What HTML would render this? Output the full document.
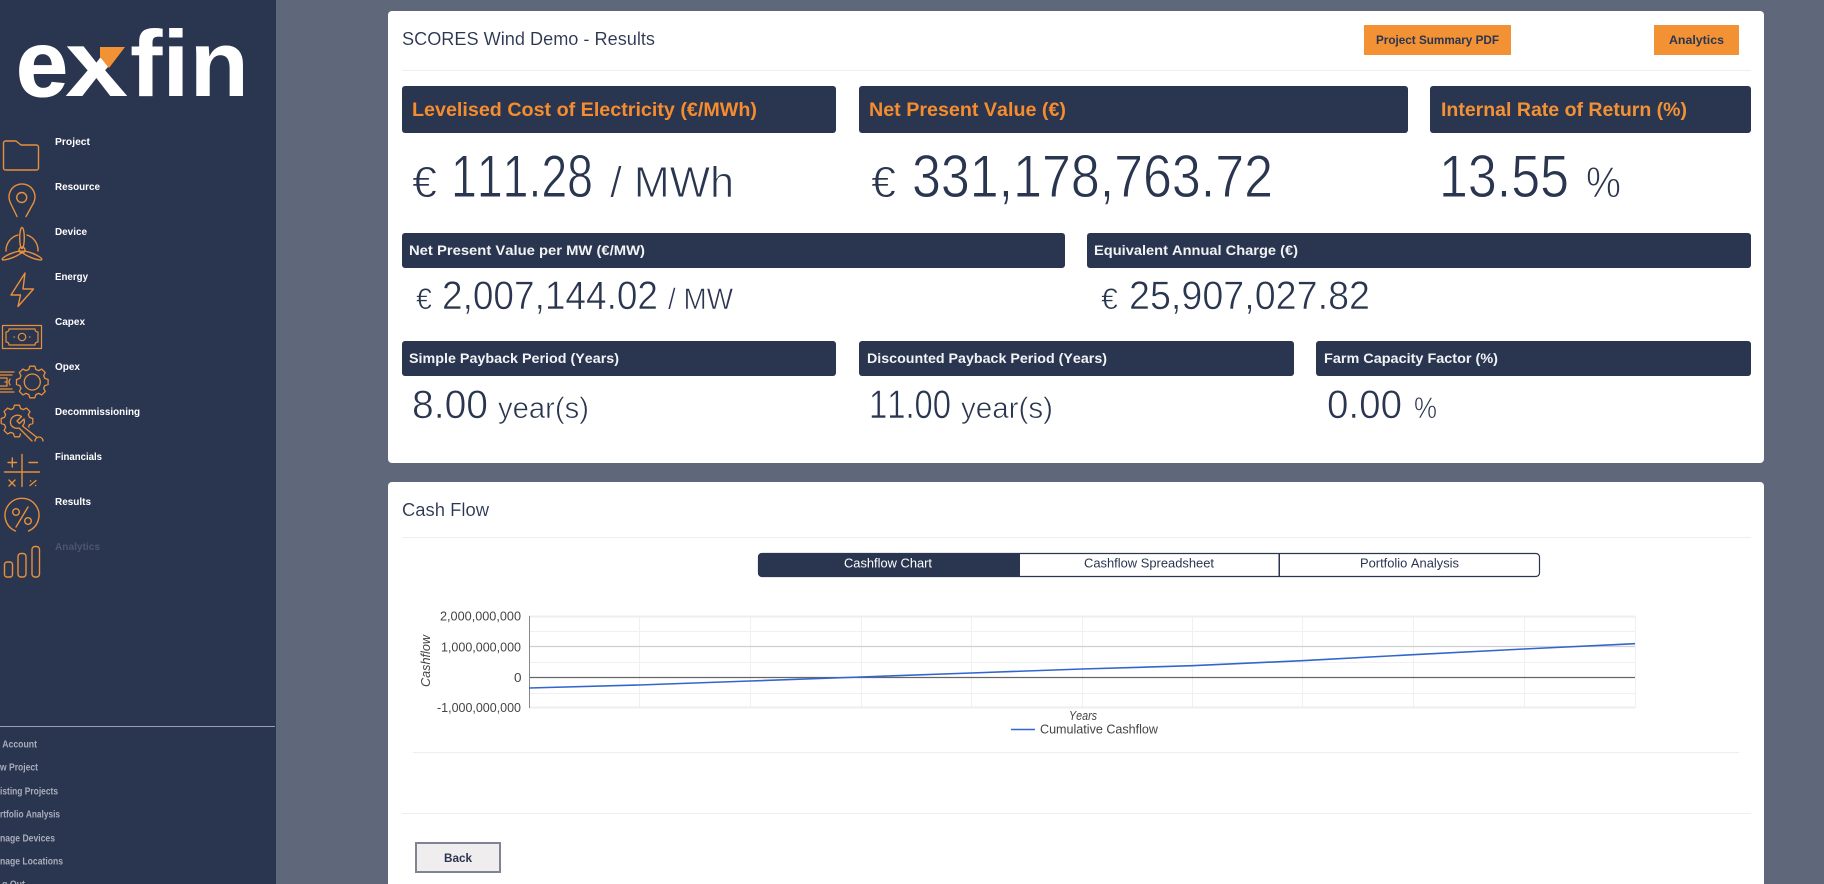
<!DOCTYPE html>
<html lang="en">
<head>
<meta charset="utf-8">
<title>exfin - Results</title>
<style>
html,body{margin:0;padding:0;width:1824px;height:884px;overflow:hidden;background:#5f677a}
svg{display:block}
text{font-family:"Liberation Sans",sans-serif;font-kerning:none}
.nav{font-size:10.5px;font-weight:700;fill:#fff}
.sub{font-size:10px;font-weight:700;fill:#a8adba}
.hb{font-size:19.5px;font-weight:700;fill:#f58c2e}
.hs{font-size:14px;font-weight:700;fill:#f2f3f5}
.big{fill:#2a3550;stroke:#fff;stroke-width:.9px}
.mid{fill:#2a3550;stroke:#fff;stroke-width:.6px}
.ttl{font-size:18.5px;fill:#2a3550;stroke:#fff;stroke-width:.1px}
.tab{font-size:12.5px;fill:#2a3550}
.ax{font-size:12.5px;fill:#444}
.ic{fill:none;stroke:#e8903a;stroke-width:1.4;stroke-linecap:round;stroke-linejoin:round}
</style>
</head>
<body>
<svg xmlns="http://www.w3.org/2000/svg" width="1824" height="884" viewBox="0 0 1824 884">
<defs>
<polygon id="gear" points="12.5,-3.58 15.8,-2.5 15.8,2.5 12.5,3.58 11.37,6.31 12.94,9.4 9.4,12.94 6.31,11.37 3.58,12.5 2.5,15.8 -2.5,15.8 -3.58,12.5 -6.31,11.37 -9.4,12.94 -12.94,9.4 -11.37,6.31 -12.5,3.58 -15.8,2.5 -15.8,-2.5 -12.5,-3.58 -11.37,-6.31 -12.94,-9.4 -9.4,-12.94 -6.31,-11.37 -3.58,-12.5 -2.5,-15.8 2.5,-15.8 3.58,-12.5 6.31,-11.37 9.4,-12.94 12.94,-9.4 11.37,-6.31"/>
</defs>
<rect width="1824" height="884" fill="#5f677a"/>

<!-- Sidebar -->
<rect width="276" height="884" fill="#2a3550"/>
<text x="16" y="96" font-weight="700" fill="#fff" font-size="94" textLength="52" lengthAdjust="spacingAndGlyphs" stroke="#fff" stroke-width="1">e</text>
<text x="65" y="96" font-weight="700" fill="#fff" font-size="94" textLength="63" lengthAdjust="spacingAndGlyphs">x</text>
<text x="130" y="96" font-weight="700" fill="#fff" font-size="94" textLength="119" lengthAdjust="spacingAndGlyphs">fin</text>
<polygon points="99,44 130,44 112,72 103,60" fill="#2a3550"/>
<polygon points="100,47 125,47 109,68 100,57" fill="#f39235"/>

<text class="nav" x="55" y="145" textLength="35" lengthAdjust="spacingAndGlyphs">Project</text>
<text class="nav" x="55" y="190" textLength="45" lengthAdjust="spacingAndGlyphs">Resource</text>
<text class="nav" x="55" y="235" textLength="32" lengthAdjust="spacingAndGlyphs">Device</text>
<text class="nav" x="55" y="280" textLength="33" lengthAdjust="spacingAndGlyphs">Energy</text>
<text class="nav" x="55" y="325" textLength="30" lengthAdjust="spacingAndGlyphs">Capex</text>
<text class="nav" x="55" y="370" textLength="25" lengthAdjust="spacingAndGlyphs">Opex</text>
<text class="nav" x="55" y="415" textLength="85" lengthAdjust="spacingAndGlyphs">Decommissioning</text>
<text class="nav" x="55" y="460" textLength="47" lengthAdjust="spacingAndGlyphs">Financials</text>
<text class="nav" x="55" y="505" textLength="36" lengthAdjust="spacingAndGlyphs">Results</text>
<text class="nav" x="55" y="550" textLength="45" lengthAdjust="spacingAndGlyphs" style="fill:#4c556c">Analytics</text>

<!-- Folder -->
<path class="ic" d="M3.5 143a2 2 0 0 1 2-2H16l5 4H36.500a2 2 0 0 1 2 2V168a2 2 0 0 1-2 2H5.500a2 2 0 0 1-2-2Z"/>
<!-- Pin -->
<path class="ic" d="M17 216.500L10.500 203A13 13 0 1 1 33.500 203L26 216.500"/>
<circle class="ic" cx="21.700" cy="197.500" r="5"/>
<!-- Turbine -->
<g class="ic">
<circle cx="22" cy="250" r="3"/>
<ellipse cx="22" cy="238" rx="2.300" ry="10.500"/>
<ellipse cx="12" cy="255.500" rx="10.500" ry="2.200" transform="rotate(-22 12 255.500)"/>
<ellipse cx="32" cy="255.500" rx="10.500" ry="2.200" transform="rotate(22 32 255.500)"/>
<path d="M6 251A16 16 0 0 1 18 235M27 235A16 16 0 0 1 38 251"/>
</g>
<!-- Bolt -->
<path class="ic" d="M25 273L11 295H20.500L18 306.500L33.500 289H23Z"/>
<!-- Capex -->
<g class="ic" style="stroke-width:1.2">
<rect x="2.500" y="325.500" width="39" height="23"/>
<path d="M9 329H35Q35 332 38 332V342Q35 342 35 345H9Q9 342 6 342V332Q9 332 9 329Z"/>
<circle cx="22" cy="337" r="3.700"/>
<path d="M14 337h.5M29.500 337h.5"/>
</g>
<!-- Opex -->
<g class="ic" style="stroke-width:1.3">
<path d="M0 372H14M0 375H12M0 389H12M0 392H14M0 378H7V386H0"/>
<path d="M10 379Q8 382 10 385M5 382H6"/>
<use href="#gear" x="32.300" y="382"/>
<circle cx="32.300" cy="382" r="8"/>
</g>
<!-- Decommissioning -->
<g class="ic" style="stroke-width:1.300">
<use href="#gear" x="17" y="421"/>
<path d="M25 431L40 446" style="stroke:#2a3550;stroke-width:10"/>
<rect x="0" y="441.500" width="50" height="12" style="fill:#2a3550;stroke:none"/>
<path d="M21.500 416.500L17 421L19.500 423.500L24 419A7 7 0 0 1 22.500 426L37 437.500"/>
<path d="M21.500 416.500A7 7 0 0 0 11 425A7 7 0 0 0 19 428L32 441"/>
<path d="M35 441A4 4 0 0 1 43 441"/>
</g>
<!-- Financials -->
<g class="ic">
<path d="M22 454.500V486.500M4.500 472H39.500"/>
<path d="M8 462.500H16.500M12.300 458V467M29 462.500H37.500M9 480L15 486M15 480L9 486M30 485.500L36 480.500"/>
<path d="M30.500 481h.2M35.500 485.500h.2"/>
</g>
<!-- Results -->
<g class="ic">
<path d="M15.500 531A17 17 0 1 1 28.500 531"/>
<path d="M28 507L16 527"/>
<circle cx="16" cy="512" r="3.300"/>
<circle cx="28" cy="521" r="3.300"/>
</g>
<!-- Analytics -->
<g class="ic">
<rect x="4.500" y="562" width="8" height="15" rx="2.500"/>
<rect x="18" y="553.500" width="8" height="23.500" rx="3"/>
<rect x="32" y="546.500" width="7.500" height="30.500" rx="3"/>
</g>

<rect x="0" y="726" width="275" height="1" fill="#9aa0b0"/>
<text class="sub" x="37" y="747.500" text-anchor="end" textLength="42" lengthAdjust="spacingAndGlyphs">y Account</text>
<text class="sub" x="38" y="770.500" text-anchor="end" textLength="38" lengthAdjust="spacingAndGlyphs">w Project</text>
<text class="sub" x="58" y="794.500" text-anchor="end" textLength="58" lengthAdjust="spacingAndGlyphs">isting Projects</text>
<text class="sub" x="60" y="817.500" text-anchor="end" textLength="60" lengthAdjust="spacingAndGlyphs">rtfolio Analysis</text>
<text class="sub" x="55" y="841.500" text-anchor="end" textLength="55" lengthAdjust="spacingAndGlyphs">nage Devices</text>
<text class="sub" x="63" y="864.500" text-anchor="end" textLength="63" lengthAdjust="spacingAndGlyphs">nage Locations</text>
<text class="sub" x="25" y="887.500" text-anchor="end" textLength="23" lengthAdjust="spacingAndGlyphs">g Out</text>

<!-- Card 1 -->
<rect x="388" y="11" width="1376" height="452" rx="4" fill="#fff"/>
<text class="ttl" x="402" y="45" textLength="253" lengthAdjust="spacingAndGlyphs">SCORES Wind Demo - Results</text>
<rect x="1364" y="25" width="147" height="30" fill="#f39235"/>
<text x="1376" y="44" font-size="12" font-weight="700" fill="#2a3550" textLength="123" lengthAdjust="spacingAndGlyphs">Project Summary PDF</text>
<rect x="1654" y="25" width="85" height="30" fill="#f39235"/>
<text x="1669" y="44" font-size="12" font-weight="700" fill="#2a3550" textLength="55" lengthAdjust="spacingAndGlyphs">Analytics</text>
<rect x="402" y="70" width="1349" height="1" fill="#eeeeee"/>

<rect x="402" y="86" width="434" height="47" rx="3" fill="#2a3550"/>
<rect x="859" y="86" width="549" height="47" rx="3" fill="#2a3550"/>
<rect x="1430" y="86" width="321" height="47" rx="3" fill="#2a3550"/>
<text class="hb" x="412" y="116" textLength="345" lengthAdjust="spacingAndGlyphs">Levelised Cost of Electricity (€/MWh)</text>
<text class="hb" x="869" y="116" textLength="197" lengthAdjust="spacingAndGlyphs">Net Present Value (€)</text>
<text class="hb" x="1441" y="116" textLength="246" lengthAdjust="spacingAndGlyphs" style="fill:#f39235">Internal Rate of Return (%)</text>

<text class="big" x="412" y="197" font-size="44" textLength="25" lengthAdjust="spacingAndGlyphs">€</text>
<text class="big" x="451" y="197" font-size="60" textLength="142" lengthAdjust="spacingAndGlyphs">111.28</text>
<text class="big" x="610" y="197" font-size="44" textLength="124" lengthAdjust="spacingAndGlyphs">/ MWh</text>
<text class="big" x="871" y="197" font-size="44" textLength="25" lengthAdjust="spacingAndGlyphs">€</text>
<text class="big" x="912" y="197" font-size="60" textLength="361" lengthAdjust="spacingAndGlyphs">331,178,763.72</text>
<text class="big" x="1439" y="197" font-size="60" textLength="130" lengthAdjust="spacingAndGlyphs">13.55</text>
<text class="big" x="1586" y="197" font-size="44" textLength="35" lengthAdjust="spacingAndGlyphs">%</text>

<rect x="402" y="233" width="663" height="35" rx="3" fill="#2a3550"/>
<rect x="1087" y="233" width="664" height="35" rx="3" fill="#2a3550"/>
<text class="hs" x="409" y="255" textLength="236" lengthAdjust="spacingAndGlyphs">Net Present Value per MW (€/MW)</text>
<text class="hs" x="1094" y="255" textLength="204" lengthAdjust="spacingAndGlyphs">Equivalent Annual Charge (€)</text>

<text class="mid" x="416" y="309" font-size="30" textLength="16" lengthAdjust="spacingAndGlyphs">€</text>
<text class="mid" x="442" y="309" font-size="40" textLength="216" lengthAdjust="spacingAndGlyphs">2,007,144.02</text>
<text class="mid" x="668" y="309" font-size="30" textLength="65" lengthAdjust="spacingAndGlyphs">/ MW</text>
<text class="mid" x="1101" y="309" font-size="30" textLength="17" lengthAdjust="spacingAndGlyphs">€</text>
<text class="mid" x="1129" y="309" font-size="40" textLength="241" lengthAdjust="spacingAndGlyphs">25,907,027.82</text>

<rect x="402" y="341" width="434" height="35" rx="3" fill="#2a3550"/>
<rect x="859" y="341" width="435" height="35" rx="3" fill="#2a3550"/>
<rect x="1316" y="341" width="435" height="35" rx="3" fill="#2a3550"/>
<text class="hs" x="409" y="363" textLength="210" lengthAdjust="spacingAndGlyphs">Simple Payback Period (Years)</text>
<text class="hs" x="867" y="363" textLength="240" lengthAdjust="spacingAndGlyphs">Discounted Payback Period (Years)</text>
<text class="hs" x="1324" y="363" textLength="174" lengthAdjust="spacingAndGlyphs">Farm Capacity Factor (%)</text>

<text class="mid" x="412" y="418" font-size="40" textLength="76" lengthAdjust="spacingAndGlyphs">8.00</text>
<text class="mid" x="498" y="418" font-size="30" textLength="91" lengthAdjust="spacingAndGlyphs">year(s)</text>
<text class="mid" x="869" y="418" font-size="40" textLength="82" lengthAdjust="spacingAndGlyphs">11.00</text>
<text class="mid" x="961" y="418" font-size="30" textLength="92" lengthAdjust="spacingAndGlyphs">year(s)</text>
<text class="mid" x="1327" y="418" font-size="40" textLength="75" lengthAdjust="spacingAndGlyphs">0.00</text>
<text class="mid" x="1414" y="418" font-size="30" textLength="23" lengthAdjust="spacingAndGlyphs">%</text>

<!-- Card 2 -->
<path d="M388 486a4 4 0 0 1 4-4H1760a4 4 0 0 1 4 4V884H388Z" fill="#fff"/>
<text class="ttl" x="402" y="516" textLength="87" lengthAdjust="spacingAndGlyphs">Cash Flow</text>
<rect x="402" y="537" width="1349" height="1" fill="#eeeeee"/>

<rect x="758.500" y="553.500" width="781" height="23" rx="3.500" fill="#fff" stroke="#2a3550" stroke-width="1.200"/>
<path d="M1020 553H762a4 4 0 0 0-4 4v16a4 4 0 0 0 4 4H1020Z" fill="#2a3550"/>
<rect x="1278.500" y="553" width="1.500" height="24" fill="#2a3550"/>
<text class="tab" x="844" y="567.500" style="fill:#fff" textLength="88" lengthAdjust="spacingAndGlyphs">Cashflow Chart</text>
<text class="tab" x="1084" y="567.500" textLength="130" lengthAdjust="spacingAndGlyphs">Cashflow Spreadsheet</text>
<text class="tab" x="1360" y="567.500" textLength="99" lengthAdjust="spacingAndGlyphs">Portfolio Analysis</text>

<!-- Chart -->
<g fill="none" stroke="#f0f0f0" stroke-width="1">
<path d="M639.500 616V708M750.500 616V708M861.500 616V708M971.500 616V708M1082.500 616V708M1192.500 616V708M1302.500 616V708M1413.500 616V708M1524.500 616V708M1635.500 616V708"/>
<path d="M529 631.500H1635M529 662.500H1635M529 693.500H1635"/>
<path d="M529 616.500H1635M529 707.500H1635" stroke-width="2" stroke="#eeeeee"/>
</g>
<path d="M529 646.500H1635" stroke="#d0d0d0" stroke-width="1.200"/>
<path d="M529 677.500H1635" stroke="#666" stroke-width="1.200"/>
<path d="M529.500 616V708" stroke="#888" stroke-width="1"/>
<polyline fill="none" stroke="#3366cc" stroke-width="1.600" points="529,688 639,685 750,681 861,677 971,673 1082,669 1192,665.700 1302,660.700 1413,654.700 1524,649 1635,643.700"/>
<text class="ax" x="440" y="620.500" textLength="81" lengthAdjust="spacingAndGlyphs">2,000,000,000</text>
<text class="ax" x="441" y="651.500" textLength="80" lengthAdjust="spacingAndGlyphs">1,000,000,000</text>
<text class="ax" x="514" y="682" textLength="7.500" lengthAdjust="spacingAndGlyphs">0</text>
<text class="ax" x="437" y="712" textLength="84" lengthAdjust="spacingAndGlyphs">-1,000,000,000</text>
<text class="ax" transform="translate(430 687) rotate(-90)" font-style="italic" textLength="52" lengthAdjust="spacingAndGlyphs">Cashflow</text>
<text class="ax" x="1069" y="720" font-style="italic" textLength="28" lengthAdjust="spacingAndGlyphs">Years</text>
<path d="M1011 729.500H1035" stroke="#3366cc" stroke-width="1.400"/>
<text class="ax" x="1040" y="733.500" textLength="118" lengthAdjust="spacingAndGlyphs">Cumulative Cashflow</text>

<rect x="413" y="752" width="1326" height="1" fill="#eeeeee"/>
<rect x="402" y="813" width="1349" height="1" fill="#eeeeee"/>
<rect x="416" y="843" width="84" height="29" fill="#efeded" stroke="#7f8494" stroke-width="2"/>
<text x="444" y="862" font-size="12" font-weight="700" fill="#2a3550" textLength="28" lengthAdjust="spacingAndGlyphs">Back</text>
</svg>
</body>
</html>
